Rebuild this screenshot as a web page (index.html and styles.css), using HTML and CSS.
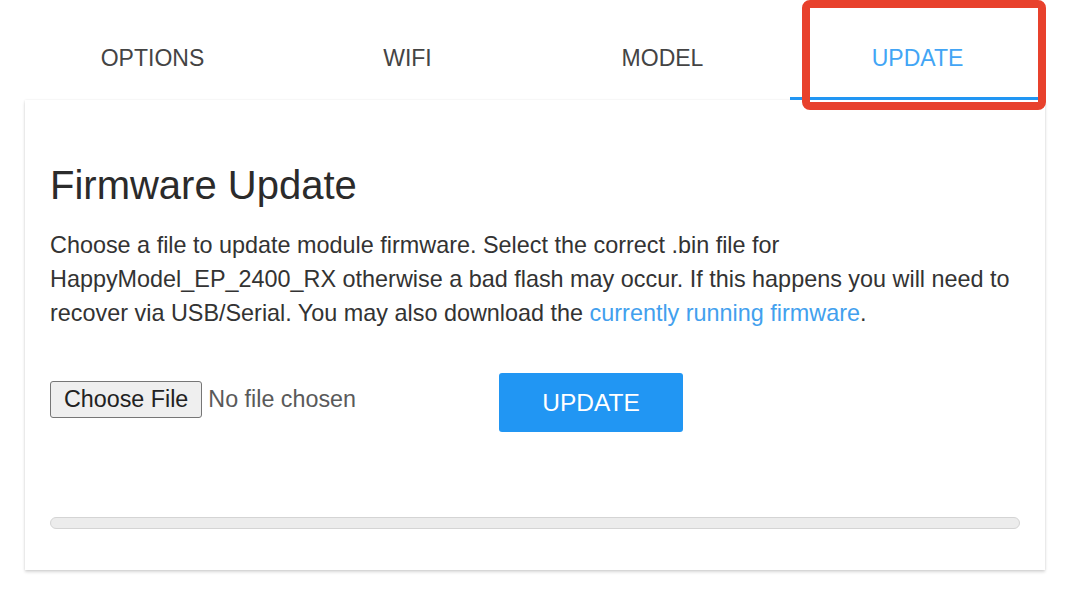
FILE: index.html
```html
<!DOCTYPE html>
<html lang="en">

<head>
    <meta charset="utf-8">
    <meta name="viewport" content="width=device-width, initial-scale=1">
    <title>Firmware Update</title>
    <link rel="stylesheet" href="styles.css">
</head>

<body>
    <div class="page">
        <nav class="tabs">
            <a class="tab" href="#options">OPTIONS</a>
            <a class="tab" href="#wifi">WIFI</a>
            <a class="tab" href="#model">MODEL</a>
            <a class="tab active" href="#update">UPDATE</a>
        </nav>

        <section class="card" id="update">
            <h1>Firmware Update</h1>
            <p>
                Choose a file to update module firmware. Select the correct .bin file for
                HappyModel_EP_2400_RX otherwise a bad flash may occur. If this happens you will need to
                recover via USB/Serial. You may also download the <a href="#firmware">currently running firmware</a>.
            </p>
            <form class="upload">
                <input type="file" class="file" name="update">
                <button type="button" class="btn">UPDATE</button>
            </form>
            <div class="progress"></div>
        </section>

        <!-- highlight around the active tab -->
        <div class="callout"></div>
    </div>
</body>

</html>
```

FILE: styles.css
```css
html {
    background: #fff;
}

body {
    margin: 0;
    font-family: "Liberation Sans", Arial, sans-serif;
    color: #333;
}

.page {
    position: relative;
    width: 1020px;
    padding: 0 25px;
    min-height: 600px;
}

.tabs {
    display: grid;
    grid-template-columns: repeat(4, 1fr);
    height: 100px;
}

.tab {
    display: flex;
    align-items: center;
    justify-content: center;
    padding-top: 19px;
    border-bottom: 3px solid transparent;
    font-size: 23px;
    color: #444;
    text-decoration: none;
}

.tab.active {
    color: #42a5f5;
    border-bottom-color: #2196f3;
}

.card {
    height: 470px;
    box-sizing: border-box;
    padding: 63px 25px 0;
    background: #fff;
    box-shadow: 0 2px 3px rgba(0, 0, 0, 0.16), 0 0 2px rgba(0, 0, 0, 0.08);
}

h1 {
    margin: 0;
    font-size: 40px;
    font-weight: normal;
    color: #2b2b2b;
}

p {
    margin: 20px 0 0;
    font-size: 23.4px;
    line-height: 34px;
    color: #333;
}

a {
    color: #42a0ee;
    text-decoration: none;
}

.upload {
    display: flex;
    align-items: flex-start;
    margin-top: 43px;
}

.file {
    width: 449px;
    margin: 8px 0 0;
    font-family: inherit;
    font-size: 23.3px;
    color: #5a5a5a;
}

.file::file-selector-button {
    margin-right: 6px;
    padding: 4px 13px;
    font-family: inherit;
    font-size: 23.3px;
    color: #222;
    background: #efefef;
    border: 1px solid #767676;
    border-radius: 3px;
}

.btn {
    width: 184px;
    height: 59px;
    padding: 0;
    font-family: inherit;
    font-size: 24.5px;
    color: #fff;
    background: #2196f3;
    border: 0;
    border-radius: 3px;
}

.progress {
    margin-top: 85px;
    height: 10px;
    border: 1px solid #d4d4d4;
    border-radius: 6px;
    background: #ececec;
}

.callout {
    position: absolute;
    left: 802px;
    top: 0;
    width: 228px;
    height: 94px;
    border: 8px solid #e8412c;
    border-radius: 8px;
}
```
